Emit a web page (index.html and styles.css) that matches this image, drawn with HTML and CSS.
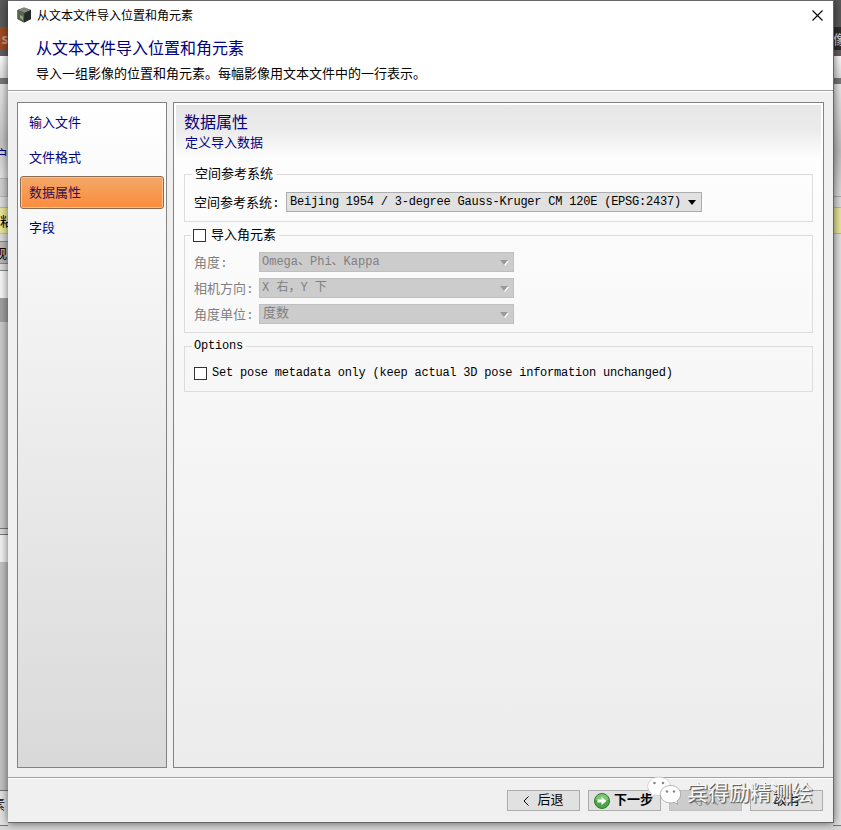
FILE: index.html
```html
<!DOCTYPE html>
<html lang="zh-CN">
<head>
  <meta charset="UTF-8">
  <meta name="viewport" content="width=device-width, initial-scale=1.0">
  <title>从文本文件导入位置和角元素</title>
  <link rel="stylesheet" href="styles.css">
</head>
<body>
  <div class="desktop">
    <!-- main window showing on both sides of the dialog -->
    <div class="behind behind-left">
      <div class="b-title"></div>
      <div class="b-orange">s</div>
      <div class="b-gap"></div>
      <div class="b-bar"></div>
      <div class="b-rule"></div>
      <div class="b-ribbon"><span>户</span></div>
      <div class="b-field"></div>
      <div class="b-space"></div>
      <div class="b-yellow"><span>主粘</span></div>
      <div class="b-space2"></div>
      <div class="b-tab"><span>观</span></div>
      <div class="b-space3"></div>
      <div class="b-white"></div>
      <div class="b-mark"></div>
      <div class="b-tree"></div>
      <div class="b-split"></div>
      <div class="b-white2"></div>
      <div class="b-panel"></div>
      <div class="b-status"><span>素</span></div>
    </div>
    <div class="behind behind-right">
      <div class="b-title"></div>
      <div class="b-black"><span>像</span></div>
      <div class="b-gap"></div>
      <div class="b-bar"></div>
      <div class="b-rule"></div>
      <div class="b-ribbon2"></div>
      <div class="b-space4"></div>
      <div class="b-yellow"></div>
      <div class="b-view"></div>
    </div>

    <div class="dialog">
      <div class="titlebar">
        <svg class="app-icon" width="16" height="16" viewBox="0 0 16 16">
          <path d="M8 0.5L15 3v9L8 15.5 1.5 12V3z" fill="#3a4038"/>
          <path d="M8 0.5L15 3 8.5 6 1.5 3z" fill="#84877f"/>
          <path d="M1.5 3l7 3L8 15.5 1.5 12z" fill="#56654e"/>
          <path d="M8.5 6L15 3v9l-7 3.5z" fill="#25292a"/>
          <path d="M4 8l3 1.5V13L4 11z" fill="#92a584"/>
        </svg>
        <span class="caption">从文本文件导入位置和角元素</span>
        <svg class="close" width="11" height="11" viewBox="0 0 11 11">
          <path d="M0.5 0.5l10 10M10.5 0.5l-10 10" stroke="#000" stroke-width="1.1" fill="none"/>
        </svg>
      </div>
      <div class="header">
        <h1>从文本文件导入位置和角元素</h1>
        <p>导入一组影像的位置和角元素。每幅影像用文本文件中的一行表示。</p>
      </div>

      <div class="content">
        <ul class="steps">
          <li>输入文件</li>
          <li>文件格式</li>
          <li class="active">数据属性</li>
          <li>字段</li>
        </ul>

        <div class="page">
          <div class="page-head">
            <h2>数据属性</h2>
            <p>定义导入数据</p>
          </div>

          <fieldset class="group srs">
            <legend>空间参考系统</legend>
            <div class="row">
              <label>空间参考系统:</label>
              <div class="combo"><span>Beijing 1954 / 3-degree Gauss-Kruger CM 120E (EPSG:2437)</span><i class="arrow"></i></div>
            </div>
          </fieldset>

          <fieldset class="group angles">
            <legend><i class="check"></i>导入角元素</legend>
            <div class="row disabled">
              <label>角度:</label>
              <div class="combo"><span>Omega、Phi、Kappa</span><i class="arrow"></i></div>
            </div>
            <div class="row disabled">
              <label>相机方向:</label>
              <div class="combo"><span>X 右，Y 下</span><i class="arrow"></i></div>
            </div>
            <div class="row disabled">
              <label>角度单位:</label>
              <div class="combo"><span class="cjk">度数</span><i class="arrow"></i></div>
            </div>
          </fieldset>

          <fieldset class="group options">
            <legend>Options</legend>
            <div class="row">
              <i class="check"></i>
              <span>Set pose metadata only (keep actual 3D pose information unchanged)</span>
            </div>
          </fieldset>
        </div>
      </div>

      <div class="footer">
        <div class="btn">
          <svg width="6" height="10" viewBox="0 0 6 10"><path d="M5.5 0.5L1 5l4.500 4.500" fill="none" stroke="#000"/></svg>
          <span>后退</span>
        </div>
        <div class="btn next">
          <svg width="16" height="16" viewBox="0 0 16 16">
            <circle cx="8" cy="8" r="7.500" fill="#4aa345" stroke="#2d7a2d"/>
            <path d="M1.500 7a6.500 6 0 0 1 13 0q-6 2-13 0z" fill="#7cc672"/>
            <path d="M3.500 6.500h4V3.800L12.500 8l-5 4.200V9.500h-4z" fill="#fff"/>
          </svg>
          <span>下一步</span>
        </div>
        <div class="btn off"><span>导入</span></div>
        <div class="btn"><span>取消</span></div>
      </div>
    </div>

    <div class="watermark">
      <svg width="36" height="32" viewBox="0 0 36 32">
        <g stroke="#bbb" stroke-width="0.600" fill="#fff">
          <path d="M12 1C5.500 1 0.800 5 0.800 10.500c0 3 1.500 5.500 4 7.200L3.800 21l4-2c1.300 0.400 2.700 0.600 4.200 0.600 6.500 0 11.500-4 11.500-9.300S18.500 1 12 1z"/>
          <path stroke="#888" d="M23.500 9.500c-5.800 0-10.200 3.800-10.200 8.700s4.400 8.700 10.200 8.700c1.300 0 2.600-0.200 3.700-0.600l3.600 2-1-3.200c2.300-1.600 3.800-4.100 3.800-6.900 0-4.900-4.300-8.700-10.100-8.700z"/>
        </g>
        <g fill="#888">
          <circle cx="7.500" cy="7" r="1.300"/><circle cx="16" cy="7" r="1.300"/>
          <circle cx="20" cy="15.500" r="1.200"/><circle cx="27" cy="15.500" r="1.200"/>
        </g>
      </svg>
      <span>宾得励精测绘</span>
    </div>
  </div>
</body>
</html>
```
FILE: styles.css
```css
* {
  box-sizing: border-box;
}
body {
  margin: 0;
  font-family: "Liberation Mono", "Noto Sans CJK SC", monospace;
  font-size: 13px;
  color: #000;
}
h1, h2, p, ul {
  margin: 0;
  padding: 0;
  font-weight: normal;
}
.desktop {
  position: relative;
  display: flex;
  justify-content: space-between;
  width: 841px;
  height: 830px;
  background: #d8d8d8;
  overflow: hidden;
}

/* window behind */
.behind {
  width: 8px;
  height: 826px;
  border-bottom: 1px solid #777;
  display: flex;
  flex-direction: column;
  overflow: hidden;
  background: #ddd;
  font-family: "Noto Sans CJK SC", sans-serif;
  line-height: 18px;
}
.behind > div {
  flex: none;
  display: flex;
  justify-content: flex-end;
  align-items: center;
}
.behind-right > div {
  justify-content: flex-start;
}
.behind span {
  flex: none;
}
.b-title { height: 27px; background: #5a5a5a; }
.b-orange { height: 23px; background: #a04a22; color: #c9a08c; font-weight: bold; }
.b-black { height: 23px; background: #2d2d2d; color: #ddd; }
.b-gap { height: 6px; background: #655d62; }
.b-bar { height: 22px; background: linear-gradient(#fff, #ddd); }
.b-rule { height: 6px; background: #777; }
.b-ribbon { height: 94px; background: linear-gradient(#e8e8e8, #c4c4c4 60%, #e4e4e4); padding-top: 45px; color: #000080; }
.b-ribbon2 { height: 113px; background: linear-gradient(#eaeaea, #bebebe 60%, #dcdcdc); border-bottom: 1px solid #aaa; }
.b-field { height: 19px; background: #d0d0d0; border: 1px solid #b5b5b5; border-left: 0; }
.b-space { height: 10px; }
.b-space4 { height: 10px; }
.b-yellow { height: 27px; background: #e9e99a; border: 1px solid #bbb; border-width: 1px 0; }
.b-yellow span { margin-right: -5px; }
.b-space2 { height: 7px; }
.b-tab { height: 22px; background: #bbb; border-top: 1px solid #888; }
.b-tab span { margin-right: 1px; }
.b-space3 { height: 8px; border: 1px solid #888; border-width: 1px 0; }
.b-white { height: 27px; background: #f8f8f8; }
.b-mark { height: 24px; background: #a2a2a2; }
.b-tree { height: 206px; background: #ccc; }
.b-split { height: 7px; border: 1px solid #777; border-width: 1px 0; }
.b-white2 { height: 27px; background: #f4f4f4; }
.b-panel { height: 228px; background: #c4c4c4; }
.b-status { flex: 1 !important; border-top: 1px solid #777; background: #e4e4e4; }
.b-status span { margin-right: 3px; margin-top: -8px; }
.b-view { flex: 1 !important; background: #e2e2e2; }

/* dialog */
.dialog {
  position: absolute;
  left: 8px;
  top: 0;
  width: 826px;
  height: 823px;
  display: flex;
  flex-direction: column;
  background: #f0f0f0;
  border: 1px solid #666;
  border-left: 0;
  box-shadow: 0 0 9px rgba(0, 0, 0, 0.6);
}
.titlebar {
  height: 28px;
  padding: 0 10px 0 8px;
  display: flex;
  align-items: center;
  background: #fff;
}
.caption {
  flex: 1;
  margin-left: 5px;
  font: 12px/16px "Noto Sans CJK SC", sans-serif;
}
.header {
  height: 62px;
  padding: 11px 0 0 28px;
  background: #fff;
  border-bottom: 1px solid #a0a0a0;
}
.header h1 {
  font-size: 16px;
  line-height: 20px;
  color: #000080;
}
.header p {
  margin-top: 6px;
  line-height: 18px;
}
.content {
  flex: 1;
  display: flex;
  gap: 6px;
  padding: 10px 9px 9px;
  border-top: 1px solid #fff;
}
.steps {
  width: 150px;
  padding: 3px 2px;
  border: 1px solid #828282;
  background: linear-gradient(#fff, #d9d9d9);
  list-style: none;
}
.steps li {
  height: 33px;
  margin-bottom: 2px;
  padding-left: 8px;
  border: 1px solid transparent;
  border-radius: 3px;
  line-height: 33px;
  color: #000080;
}
.steps .active {
  background: linear-gradient(#f3a768, #fb8c3c);
  border-color: #8a6a50;
  box-shadow: inset 0 0 0 1px #ffc08c;
  color: #30104c;
}
.page {
  flex: 1;
  padding: 2px 10px 0 8px;
  border: 1px solid #828282;
  background: linear-gradient(#fff, #ececec);
}
.page-head {
  height: 62px;
  margin: 0 -8px 0 -6px;
  padding: 9px 0 0 8px;
  background: linear-gradient(#e6e6e6, #ebebeb 40%, #fdfdfd 85%);
  color: #000080;
}
.page-head h2 {
  font-size: 16px;
  line-height: 20px;
}
.page-head p {
  margin: 1px 0 0 1px;
  line-height: 18px;
}
.group {
  min-width: 0;
  margin: 0 0 6px 2px;
  padding: 0 9px;
  border: 1px solid #dcdcdc;
}
.group legend {
  display: flex;
  align-items: center;
  height: 15px;
  margin-left: -2px;
  padding: 0 3px 0 2px;
  line-height: 15px;
}
.srs { height: 55px; }
.srs legend { padding-left: 3px; }
.angles { height: 105px; }
.options { height: 53px; }
.angles legend { margin-left: -3px; }
.check {
  width: 13px;
  height: 13px;
  margin-right: 5px;
  border: 1px solid #333;
  background: #fff;
}
.options legend, .options span, .combo span {
  font-size: 12px;
  letter-spacing: -0.22px;
}
.options legend {
  line-height: 17px;
}
.row {
  display: flex;
  align-items: center;
  height: 20px;
  margin-bottom: 6px;
}
.srs .row { margin-top: 10px; }
.angles .row:first-of-type { margin-top: 9px; }
.options .row { margin-top: 9px; }
.row label {
  width: 92px;
  margin-top: -2px;
  white-space: nowrap;
}
.combo {
  display: flex;
  align-items: center;
  justify-content: space-between;
  width: 416px;
  height: 20px;
  padding: 0 5px 0 3px;
  background: #e1e1e1;
  border: 1px solid #adadad;
  line-height: 18px;
  white-space: pre;
}
.arrow {
  border: 4px solid transparent;
  border-top: 5px solid #000;
  border-bottom: 0;
}
.disabled {
  color: #808080;
}
.disabled label {
  width: 65px;
}
.disabled .combo {
  width: 255px;
  padding-left: 2px;
  background: #ccc;
  border-color: #bfbfbf;
}
.disabled .combo span {
  letter-spacing: 0;
}
.disabled .combo .cjk {
  margin-left: 1px;
  font-size: 13px;
}
.disabled .arrow {
  border-top-color: #999;
  filter: drop-shadow(1px 1px 0 #fff);
}
.footer {
  height: 45px;
  padding: 12px 10px 0 0;
  display: flex;
  justify-content: flex-end;
  gap: 8px;
  border-top: 1px solid #a0a0a0;
  box-shadow: inset 0 1px 0 #fff;
}
.btn {
  width: 73px;
  height: 21px;
  display: flex;
  align-items: center;
  justify-content: center;
  background: #e1e1e1;
  border: 1px solid #adadad;
  line-height: 18px;
}
.btn svg + span {
  margin-left: 8px;
}
.btn.next svg + span {
  margin-left: 4px;
  margin-right: 2px;
  font-weight: bold;
}
.btn.off {
  background: #ccc;
  border-color: #bfbfbf;
  color: #888;
}

/* account mark over the buttons */
.watermark {
  position: absolute;
  left: 647px;
  top: 776px;
  display: flex;
}
.watermark span {
  margin: 0 0 0 4px;
  font: 21px/30px "Noto Sans CJK SC", sans-serif;
  color: #f8f8f8;
  text-shadow: 1px 1px 0 #666, 1px 1px 1px #555;
}
```
